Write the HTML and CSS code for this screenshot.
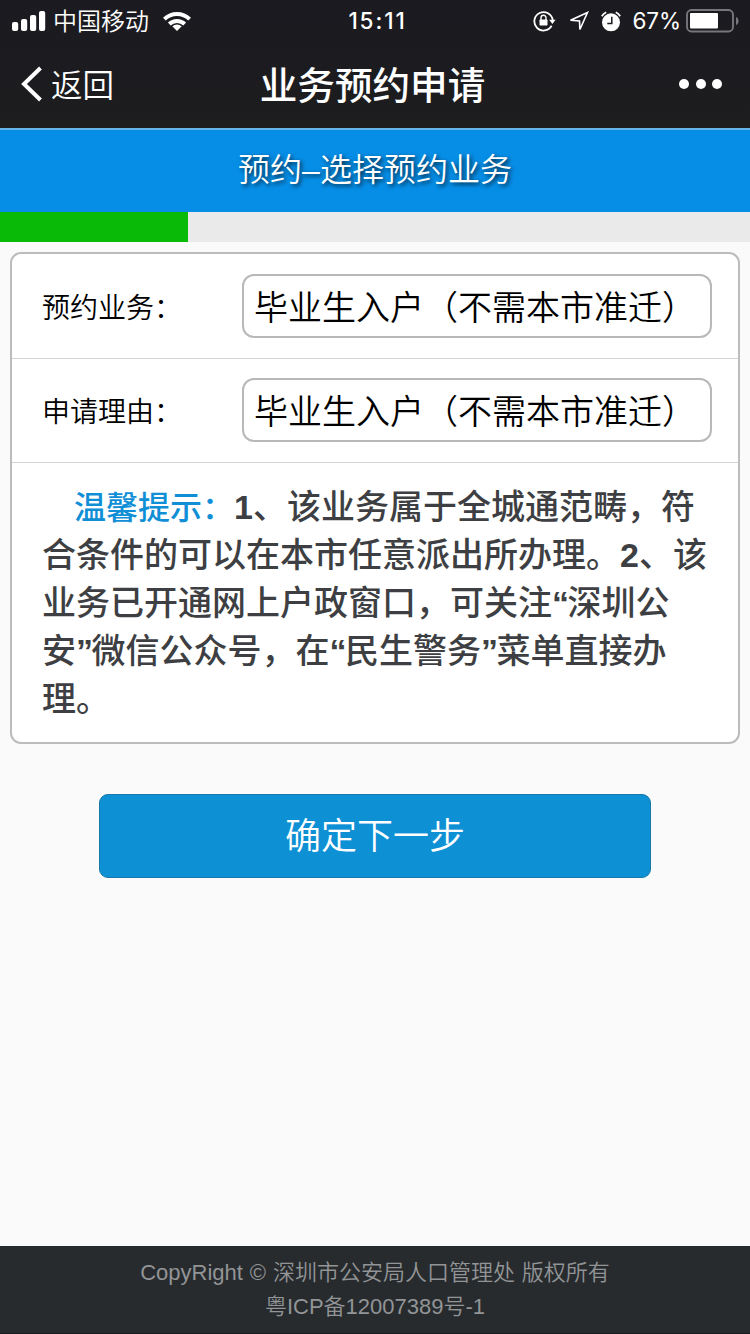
FILE: index.html
```html
<!DOCTYPE html>
<html lang="zh-CN">
<head>
<meta charset="utf-8">
<title>业务预约申请</title>
<link rel="stylesheet" href="styles.css">
</head>
<body>
<div class="screen">
  <header class="top">
    <div class="status">
      <div class="status-left">
        <svg class="signal" width="34" height="20" viewBox="0 0 34 20" fill="#fff"><rect x="0" y="11" width="6.2" height="9" rx="2"/><rect x="9" y="8" width="6.2" height="12" rx="2"/><rect x="18" y="4" width="6.2" height="16" rx="2"/><rect x="27" y="0" width="6.2" height="20" rx="2"/></svg>
        <span class="carrier">中国移动</span>
        <svg class="wifi" width="28" height="20" viewBox="0 0 28 20" fill="none" stroke="#fff" stroke-width="4"><path d="M1.4 8.1a18.2 18.2 0 0 1 25.2 0"/><path d="M6.3 13a11.2 11.2 0 0 1 15.4 0"/><path d="M14 20l-4.7-4.7a7 7 0 0 1 9.4 0z" fill="#fff" stroke="none"/></svg>
      </div>
      <span class="time">15:11</span>
      <div class="status-right">
        <svg width="23" height="22" viewBox="0 0 23 22" fill="none" stroke="#fff" stroke-width="1.8"><path d="M18.6 15.8a9.2 9.2 0 1 1 1.1-5.6"/><path d="M16.2 9.8h6.4l-3.2 4.3z" fill="#fff" stroke="none"/><path d="M8 10V7.8a2.5 2.5 0 0 1 5 0V10" stroke-width="1.4"/><rect x="6.5" y="9.5" width="8" height="6" rx=".7" fill="#fff" stroke="none"/></svg>
        <svg class="locate" width="20" height="20" viewBox="0 0 20 20" fill="none" stroke="#fff" stroke-width="1.6"><path d="M18.5 1.5L1.5 9.3l9 .6.4 8.6z"/></svg>
        <svg class="alarm" width="20" height="21" viewBox="0 0 20 21"><circle cx="10" cy="11.3" r="9" fill="#fff"/><path d="M.8 5.2A11 11 0 0 1 5.2 1.2M14.8 1.2a11 11 0 0 1 4.4 4" stroke="#fff" stroke-width="1.8" fill="none"/><path d="M10.8 5.8v6.7H6.3" stroke="#1b1b20" stroke-width="1.5" fill="none"/></svg>
        <span class="percent">67%</span>
        <svg class="battery" width="54" height="24" viewBox="0 0 54 24"><rect x="1" y="1" width="46" height="21.5" rx="4.5" fill="none" stroke="#77777b" stroke-width="1.9"/><rect x="4" y="4" width="28" height="15.5" rx="1" fill="#fff"/><path d="M50 8c3.4 1 3.4 7 0 8z" fill="#77777b"/></svg>
      </div>
    </div>
    <nav class="nav">
      <a class="back"><svg width="22" height="36" viewBox="0 0 22 36" fill="none" stroke="#fff" stroke-width="4"><path d="M19.5 2L3 18l16.5 16"/></svg><span>返回</span></a>
      <h1 class="nav-title">业务预约申请</h1>
      <div class="more"><i></i><i></i><i></i></div>
    </nav>
  </header>
  <div class="banner"><span>预约–选择预约业务</span></div>
  <div class="progress"><div class="progress-done"></div></div>
  <main class="main">
    <section class="card">
      <div class="row"><span class="label">预约业务：</span><div class="select">毕业生入户（不需本市准迁）</div></div>
      <div class="row"><span class="label">申请理由：</span><div class="select">毕业生入户（不需本市准迁）</div></div>
      <p class="tip"><span class="tip-head">温馨提示：</span><b>1</b>、该业务属于全城通范畴，符<br>合条件的可以在本市任意派出所办理。<b>2</b>、该<br>业务已开通网上户政窗口，可关注<b class="quote">“</b>深圳公<br>安<b class="quote">”</b>微信公众号，在<b class="quote">“</b>民生警务<b class="quote">”</b>菜单直接办<br>理。</p>
    </section>
    <div class="submit">确定下一步</div>
  </main>
  <footer class="footer">
    <div class="copyright">CopyRight © 深圳市公安局人口管理处 版权所有</div>
    <div>粤ICP备12007389号-1</div>
  </footer>
</div>
</body>
</html>
```
FILE: styles.css
```css
* { box-sizing: border-box; }
body { margin: 0; font-family: "Liberation Sans", "Noto Sans CJK SC", sans-serif; }
.screen { width: 750px; height: 1334px; display: flex; flex-direction: column; background: #fafafa; overflow: hidden; white-space: nowrap; }
.top { height: 128px; background: linear-gradient(#1b1a20, #1d1d1f); color: #fff; }
.status { height: 40px; display: grid; grid-template-columns: 1fr auto 1fr; align-items: center; padding: 0 10px 0 12px; }
.status-left { display: flex; align-items: center; }
.carrier { font-size: 24px; font-weight: 350; line-height: 40px; padding-top: 1px; margin-left: 7px; }
.wifi { margin-left: 14px; }
.time { font-family: Inter, sans-serif; font-size: 22.5px; font-weight: 500; line-height: 42px; letter-spacing: 1.9px; padding-left: 3px; }
.status-right { display: flex; align-items: center; justify-content: flex-end; }
.locate { margin-left: 13px; }
.alarm { margin-left: 12px; }
.percent { font-family: Inter, sans-serif; font-size: 22.5px; line-height: 42px; margin-left: 12px; letter-spacing: -.1px; }
.battery { margin-left: 5px; }
.nav { height: 88px; display: grid; grid-template-columns: 1fr auto 1fr; align-items: center; padding: 0 28px 0 21px; }
.back { display: flex; align-items: center; gap: 8px; font-size: 31.5px; font-weight: 350; line-height: 84px; }
.back span { padding-top: 3px; }
.nav-title { margin: 0; padding: 3px 0 0 2px; font-size: 37.6px; font-weight: 500; line-height: 84px; }
.more { display: flex; justify-content: flex-end; gap: 6.5px; }
.more i { width: 10px; height: 10px; border-radius: 50%; background: #fff; }
.banner { height: 84px; background: #068ee7; border-top: 2px solid #65b5eb; color: #fff; text-align: center; font-size: 32px; font-weight: 350; line-height: 80px; text-shadow: 2px 2px 4px rgba(0, 0, 0, .75); }
.progress { height: 30px; background: #eaeaea; }
.progress-done { width: 188px; height: 30px; background: #09bb07; }
.main { flex: 1; padding: 10px 10px 0; }
.card { height: 492px; border: 2px solid #bcbcbc; border-radius: 11px; background: #fff; }
.row { height: 104.5px; display: flex; align-items: center; border-bottom: 1px solid #d4d4d4; padding: 0 26px 0 30px; }
.row + .row { height: 104px; }
.label { width: 200px; padding-top: 6px; font-size: 28px; font-weight: 350; line-height: 40px; color: #000; }
.select { width: 470px; height: 64px; border: 2px solid #b8b8b8; border-radius: 12px; padding: 2px 0 0 10px; font-size: 34px; font-weight: 350; line-height: 60px; color: #000; }
.tip { margin: 0; padding: 20px 0 0 30px; text-indent: 32px; font-size: 34px; font-weight: 500; line-height: 48px; color: #3e3f43; }
.tip b { font-weight: 700; line-height: 0; }
.tip .quote { letter-spacing: -1.5px; }
.tip-head { font-size: 32px; line-height: 0; color: #108fd6; }
.submit { width: 552px; height: 84px; margin: 50px auto 0; border: 1px solid #1578a9; border-radius: 9px; background: #0e90d5; color: #fff; text-align: center; font-size: 36px; font-weight: 350; line-height: 84px; }
.footer { height: 88px; background: #272b2e; border-bottom: 1px solid #17181b; padding-top: 10px; text-align: center; font-size: 22px; font-weight: 350; line-height: 34px; color: #929496; }
.copyright { word-spacing: .8px; }
```
